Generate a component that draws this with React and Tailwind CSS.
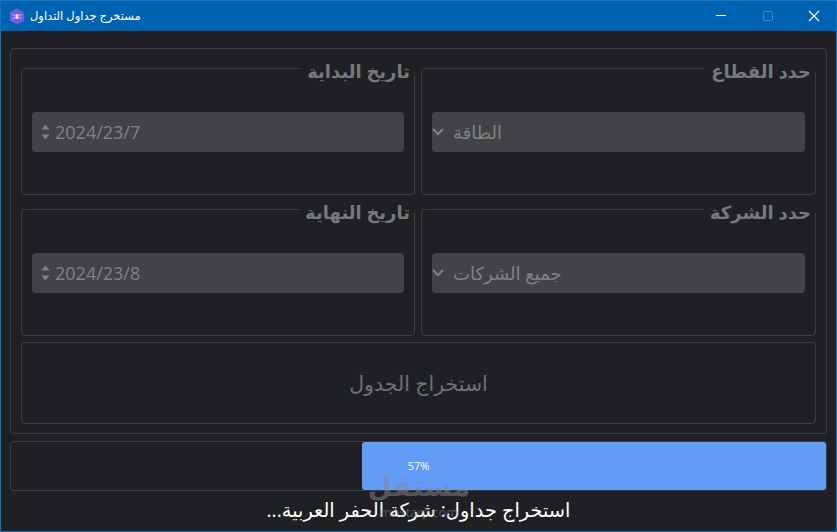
import React from 'react';

const arabic = "font-['Open_Sans','DejaVu_Sans',sans-serif]";

// Boite avec legende posee sur le bord haut
const GroupBox = ({ title, children }) => (
  <div className="relative flex items-start rounded border border-[#3c3d41] px-[10px] pt-[43px]">
    <div className="absolute right-[-1px] top-[-1px] h-[4px] bg-[#1f2024] pl-[6px] pr-[5px]">
      <span
        dir="rtl"
        className={`-mt-[9px] block whitespace-nowrap text-[18px] font-bold leading-[24px] text-[#77787b] ${arabic}`}
      >
        {title}
      </span>
    </div>
    {children}
  </div>
);

const DateField = ({ value }) => (
  <div className="flex h-10 w-full items-center gap-[5px] rounded bg-[#424346] pl-[9px]">
    <svg width="9" height="18" viewBox="0 0 9 18" fill="#808184">
      <path d="M4.5 1.5 L8.5 6.5 H0.5 Z" />
      <path d="M4.5 16.5 L8.5 11.5 H0.5 Z" />
    </svg>
    <span className="font-['Open_Sans',sans-serif] text-[18px] leading-6 text-[#808184]">{value}</span>
  </div>
);

const SelectField = ({ value }) => (
  <div className="flex h-10 w-full items-center rounded bg-[#424346]">
    <svg width="12" height="10" viewBox="0 0 12 10" fill="none" stroke="#808184" strokeWidth="2">
      <path d="M1 2 L6 7 L11 2" />
    </svg>
    <span dir="rtl" className={`ml-[9px] text-[18px] leading-6 text-[#808184] ${arabic}`}>{value}</span>
  </div>
);

export default function App() {
  return (
    <div className="relative flex h-[532px] w-[837px] flex-col overflow-hidden border border-t-0 border-[#0a74c9] bg-[#1f2024]">
      {/* Barre de titre */}
      <div className="-mx-px flex h-[31px] shrink-0 items-center border-t border-[#1a76bd] bg-[#0063b1] pl-[9px]">
        <svg width="16" height="17" viewBox="0 0 16 17">
          <path d="M8 0.5 L15.2 4.5 V12.5 L8 16.5 L0.8 12.5 V4.5 Z" fill="#7a5be0" />
          <rect x="6.5" y="6" width="3" height="5" fill="#e6e2fb" />
          <path d="M3.5 6.5 L5.5 7.5 M3.5 10.5 L5.5 9.5 M12.5 6.5 L10.5 7.5 M12.5 10.5 L10.5 9.5" stroke="#cfc6f6" strokeWidth="1" />
        </svg>
        <span dir="rtl" className={`ml-[5px] text-[11.5px] leading-4 text-white ${arabic}`}>مستخرج جداول التداول</span>
        <div className="ml-auto flex items-center">
          <svg width="12" height="12" viewBox="0 0 12 12" className="mr-[35px]" stroke="#ffffff" strokeWidth="1">
            <path d="M1 5.5 H11" />
          </svg>
          <svg width="12" height="12" viewBox="0 0 12 12" className="mr-[34px]" fill="none" stroke="#7fb0dc" strokeWidth="1" strokeDasharray="1 1">
            <rect x="1.5" y="1.5" width="9" height="9" rx="1" />
          </svg>
          <svg width="12" height="12" viewBox="0 0 12 12" className="mr-[17px]" stroke="#ffffff" strokeWidth="1.1">
            <path d="M1 1 L11 11 M11 1 L1 11" />
          </svg>
        </div>
      </div>

      <div className="flex flex-1 flex-col px-[9px] pt-[17px]">
        {/* Formulaire */}
        <div className="flex h-[386px] flex-col rounded border border-[#3c3d41] pl-[10px] pr-[9px] pt-[19px]">
          <div className="grid grid-cols-[394px_395px] grid-rows-[127px_127px] gap-x-[6px] gap-y-[14px]">
            <GroupBox title="تاريخ البداية"><DateField value="2024/23/7" /></GroupBox>
            <GroupBox title="حدد القطاع"><SelectField value="الطاقة" /></GroupBox>
            <GroupBox title="تاريخ النهاية"><DateField value="2024/23/8" /></GroupBox>
            <GroupBox title="حدد الشركة"><SelectField value="جميع الشركات" /></GroupBox>
          </div>
          <div className={`mt-[6px] flex h-[82px] w-[795px] items-center justify-center rounded border border-[#3c3d41] text-[20.5px] text-[#6f7073] ${arabic}`}>
            <span dir="rtl">استخراج الجدول</span>
          </div>
        </div>

        {/* Progression */}
        <div className="relative mt-[7px] flex h-[50px] w-[817px] justify-end rounded border border-[#3c3d41]">
          <div className="h-full w-[464px] rounded-[3px] bg-[#639cf7]" />
          <span className="absolute inset-0 flex items-center justify-center font-['Open_Sans',sans-serif] text-[11px] text-white">57%</span>
        </div>

        <p dir="rtl" className={`mt-[7px] w-[817px] text-center text-[19.4px] leading-6 text-white ${arabic}`}>
          استخراج جداول: شركة الحفر العربية...
        </p>
      </div>

      {/* Filigrane */}
      <div className="pointer-events-none absolute left-[367px] top-[466px] flex w-[102px] flex-col items-center text-[#8a8a8a] opacity-50">
        <span dir="rtl" className={`text-[28px] font-bold leading-[38px] ${arabic}`}>مستقل</span>
        <span className="mt-0 font-['Open_Sans',sans-serif] text-[13px] leading-4">mostaql.com</span>
      </div>
    </div>
  );
}
